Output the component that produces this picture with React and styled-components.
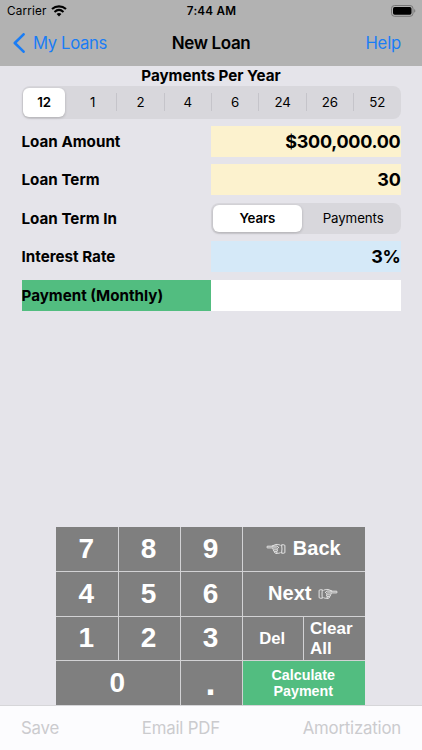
import React from 'react';
import styled, { createGlobalStyle } from 'styled-components';

const GlobalStyle = createGlobalStyle`
  * {
    box-sizing: border-box;
  }

  body {
    margin: 0;
    font-family: Inter, 'Liberation Sans', sans-serif;
    color: #000;
  }
`;

const Screen = styled.div`
  width: 422px;
  height: 750px;
  display: flex;
  flex-direction: column;
  background: #e5e4ea;
  overflow: hidden;
`;

const Header = styled.header`
  height: 66px;
  flex: none;
  background: #b2b2b2;
`;

const StatusBar = styled.div`
  height: 22px;
  display: grid;
  grid-template-columns: 1fr auto 1fr;
  align-items: center;
  padding: 0 6px 0 7px;
  font-size: 11.7px;
`;

const Carrier = styled.div`
  display: flex;
  align-items: center;
  gap: 4px;
  letter-spacing: 0.2px;
`;

const Clock = styled.div`
  font-weight: 600;
  letter-spacing: 0.2px;
`;

const BatteryIcon = styled.svg`
  justify-self: end;
`;

const NavBar = styled.nav`
  height: 42px;
  display: grid;
  grid-template-columns: 1fr auto 1fr;
  align-items: center;
  padding: 0 21px 0 13px;
`;

const NavLink = styled.a`
  display: flex;
  align-items: center;
  gap: 8px;
  justify-self: ${({ $end }) => ($end ? 'end' : 'start')};
  color: #1a7df5;
  font-size: 16.7px;
  letter-spacing: ${({ $end }) => ($end ? '-0.2px' : '-0.38px')};
`;

const NavTitle = styled.h1`
  margin: 0 -4px 0 4px;
  font-size: 17px;
  font-weight: 600;
  letter-spacing: -0.35px;
`;

const Form = styled.main`
  width: 379px;
  margin-left: 21.5px;
  flex: 1;
`;

const SectionTitle = styled.h2`
  margin: 0;
  height: 20px;
  line-height: 20px;
  text-align: center;
  font-size: 15.2px;
  font-weight: 700;
`;

const SegmentedControl = styled.div`
  display: grid;
  grid-auto-flow: column;
  grid-auto-columns: minmax(0, 1fr);
  height: ${({ $height }) => $height}px;
  border-radius: 8px;
  background: #d8d7dc;
`;

const SegmentCell = styled.div`
  min-width: 0;
  display: flex;
  align-items: center;
  padding: ${({ $active }) => ($active ? '2px 3.5px 2px 1.5px' : '0')};
`;

const Segment = styled.button`
  flex: 1;
  min-width: 0;
  height: 100%;
  margin: 0;
  padding: 0;
  border: 0;
  border-radius: 6px;
  font-family: inherit;
  font-size: 13.3px;
  font-weight: ${({ $active }) => ($active ? 600 : 400)};
  letter-spacing: -0.1px;
  color: #000;
  background: ${({ $active }) => ($active ? '#fff' : 'transparent')};
  box-shadow: ${({ $active }) => ($active ? '0 1px 3px rgba(0, 0, 0, 0.2)' : 'none')};
`;

const Divider = styled.span`
  width: 1px;
  height: 18px;
  background: #c5c4ca;
`;

const Fields = styled.div`
  display: grid;
  grid-auto-rows: 31px;
  row-gap: 7.6px;
  margin-top: 7px;
`;

const Field = styled.div`
  display: grid;
  grid-template-columns: 189.5px 189.5px;
`;

const FieldLabel = styled.label`
  display: flex;
  align-items: center;
  font-size: 15.2px;
  font-weight: 700;
  background: ${({ $color }) => $color || 'transparent'};
`;

const FieldValue = styled.div`
  display: flex;
  align-items: center;
  justify-content: flex-end;
  font-size: 18px;
  font-weight: 700;
  letter-spacing: -0.27px;
  background: ${({ $color }) => $color};
`;

const Keypad = styled.div`
  flex: none;
  width: 309px;
  height: 178px;
  margin-left: 56px;
  display: grid;
  grid-template-columns: 61.5px 61px 61px 60.5px 61px;
  grid-template-rows: repeat(4, 1fr);
  gap: 1px;
  background: #d2d2d4;
`;

const Key = styled.button`
  grid-column: span ${({ $span }) => $span || 1};
  display: flex;
  align-items: center;
  justify-content: ${({ $align }) => $align || 'center'};
  gap: 7px;
  margin: 0;
  padding: ${({ $align }) => ($align ? '1px 0 0 6px' : '0 1px 0 0')};
  border: 0;
  color: #fff;
  background: ${({ $primary }) => ($primary ? '#52bd80' : '#7f7f7f')};
  font-family: 'Liberation Sans', sans-serif;
  font-size: ${({ $size }) => $size || 28}px;
  font-weight: 700;
  line-height: 1.15;
  text-align: ${({ $align }) => ($align ? 'left' : 'center')};
  white-space: pre-line;
`;

const Toolbar = styled.footer`
  flex: none;
  height: 45px;
  display: flex;
  align-items: center;
  justify-content: space-between;
  padding: 0 21px;
  border-top: 1px solid #d6d6d9;
  background: #fcfcfe;
`;

const ToolbarItem = styled.span`
  font-size: 16.8px;
  font-weight: 400;
  letter-spacing: -0.2px;
  color: #cbcbce;
`;

const WifiIcon = () => (
  <svg width="16" height="12" viewBox="0 0 16 12" fill="none" stroke="#000">
    <path d="M1 4.1C5 .4 11 .4 15 4.1" strokeWidth="2.1" />
    <path d="M3.5 6.9c2.7-2.4 6.3-2.4 9 0" strokeWidth="2" />
    <path d="M5.6 8.9c1.4-1.2 3.4-1.2 4.8 0L8 11.5z" fill="#000" stroke="none" />
  </svg>
);

const ChevronIcon = () => (
  <svg width="12" height="20" viewBox="0 0 12 20" fill="none" stroke="currentColor" strokeWidth="2.6">
    <path d="M10.6 1.3L1.8 10l8.8 8.7" strokeLinecap="round" strokeLinejoin="round" />
  </svg>
);

const HandIcon = ({ flip }) => (
  <svg width="20" height="12" viewBox="0 0 20 12" fill="none" stroke="currentColor" strokeWidth="0.8" strokeLinejoin="round">
    <g transform={flip ? 'matrix(-1 0 0 1 20 0)' : undefined}>
      <path d="M8.5 3.2H1.7C.5 3.2.5 4.9 1.7 4.9h5.6" />
      <path d="M5.8 3.2c1.4-.5 2.6-1.4 4.3-1.7 1.7-.2 3.1.2 4.5.9" />
      <path d="M7.3 4.9c-.9.8-.4 1.8.4 2-.5.8 0 1.7.8 1.8-.1 1 .6 1.6 1.5 1.6 1.7.3 3.2-.1 4.6-.7" />
      <path d="M7.4 4.9l3.3.1c1.2.1 1.1 1.7 0 1.8l-2.9.1M10.8 6.8c1 .2.8 1.7-.2 1.8l-2 .1M10.7 8.5c.7.4.4 1.4-.3 1.7M8.5 3.2l2.8-.2 1.5 2" />
      <path d="M15.6 1.8h2.2c.7 0 1.1.4 1.1.9v6.6c0 .5-.4.9-1.1.9h-2.2M15.6 1.8c.5 2.6.5 5.8 0 8.4" />
    </g>
  </svg>
);

const YELLOW = '#fcf2ce';
const BLUE = '#d5e9f8';
const GREEN = '#52bd80';

const Segmented = ({ options, active, height }) => (
  <SegmentedControl $height={height}>
    {options.map((option, index) => (
      <SegmentCell key={option} $active={index === active}>
        {index > active + 1 && <Divider />}
        <Segment $active={index === active}>{option}</Segment>
      </SegmentCell>
    ))}
  </SegmentedControl>
);

const App = () => {
  const frequencies = ['12', '1', '2', '4', '6', '24', '26', '52'];

  return (
    <>
      <GlobalStyle />
      <Screen>
        <Header>
          <StatusBar>
            <Carrier>Carrier <WifiIcon /></Carrier>
            <Clock>7:44 AM</Clock>
            <BatteryIcon width="25" height="12" viewBox="0 0 25 12">
              <rect x="0.5" y="0.5" width="21.5" height="10.8" rx="3" fill="none" stroke="#777" />
              <rect x="2" y="2" width="18.5" height="7.8" rx="1.7" />
              <path d="M23.2 4c1.5.6 1.5 3.2 0 3.8z" fill="#777" />
            </BatteryIcon>
          </StatusBar>
          <NavBar>
            <NavLink><ChevronIcon />My Loans</NavLink>
            <NavTitle>New Loan</NavTitle>
            <NavLink $end>Help</NavLink>
          </NavBar>
        </Header>
        <Form>
          <SectionTitle>Payments Per Year</SectionTitle>
          <Segmented options={frequencies} active={0} height={32.5} />
          <Fields>
            <Field>
              <FieldLabel>Loan Amount</FieldLabel>
              <FieldValue $color={YELLOW}>$300,000.00</FieldValue>
            </Field>
            <Field>
              <FieldLabel>Loan Term</FieldLabel>
              <FieldValue $color={YELLOW}>30</FieldValue>
            </Field>
            <Field>
              <FieldLabel>Loan Term In</FieldLabel>
              <Segmented options={['Years', 'Payments']} active={0} height={31} />
            </Field>
            <Field>
              <FieldLabel>Interest Rate</FieldLabel>
              <FieldValue $color={BLUE}>3%</FieldValue>
            </Field>
            <Field>
              <FieldLabel $color={GREEN}>Payment (Monthly)</FieldLabel>
              <FieldValue $color="#fff" />
            </Field>
          </Fields>
        </Form>
        <Keypad>
          <Key>7</Key>
          <Key>8</Key>
          <Key>9</Key>
          <Key $span={2} $size={20}><HandIcon />Back</Key>
          <Key>4</Key>
          <Key>5</Key>
          <Key>6</Key>
          <Key $span={2} $size={20}>Next<HandIcon flip /></Key>
          <Key>1</Key>
          <Key>2</Key>
          <Key>3</Key>
          <Key $size={16.7}>Del</Key>
          <Key $size={17} $align="flex-start">{'Clear\nAll'}</Key>
          <Key $span={2}>0</Key>
          <Key $size={36}>.</Key>
          <Key $span={2} $size={14.3} $primary>{'Calculate\nPayment'}</Key>
        </Keypad>
        <Toolbar>
          <ToolbarItem>Save</ToolbarItem>
          <ToolbarItem>Email PDF</ToolbarItem>
          <ToolbarItem>Amortization</ToolbarItem>
        </Toolbar>
      </Screen>
    </>
  );
};

export default App;
